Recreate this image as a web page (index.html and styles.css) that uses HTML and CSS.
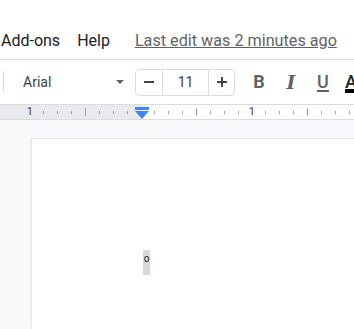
FILE: index.html
```html
<!DOCTYPE html>
<html lang="en">
<head>
  <meta charset="UTF-8" />
  <meta name="viewport" content="width=device-width, initial-scale=1.0"/>
  <title>Docs</title>
  <link rel="stylesheet" href="styles.css">
</head>
<body>

  <div class="menubar">
    <span class="menu-item">Add-ons</span>
    <span class="menu-item help">Help</span>
    <a class="last-edit" href="#">Last edit was 2 minutes ago</a>
  </div>

  <div class="toolbar">
    <span class="divider"></span>
    <div class="font-select">
      <span>Arial</span>
      <span class="caret"></span>
    </div>
    <div class="size-box">
      <button class="size-btn minus-btn"><span class="minus"></span></button>
      <span class="size-value">11</span>
      <button class="size-btn plus-btn"><span class="plus"></span></button>
    </div>
    <button class="fmt bold">B</button>
    <button class="fmt italic">I</button>
    <button class="fmt underline"><span>U</span></button>
    <button class="fmt color"><span>A</span></button>
  </div>

  <div class="ruler">
    <div class="ticks">
      <span class="cell"><span class="num">1</span></span>
      <span class="cell"><span class="tick"></span></span>
      <span class="cell"><span class="tick"></span></span>
      <span class="cell"><span class="tick"></span></span>
      <span class="cell"><span class="tick long"></span></span>
      <span class="cell"><span class="tick"></span></span>
      <span class="cell"><span class="tick"></span></span>
      <span class="cell"><span class="tick"></span></span>
      <span class="cell"></span>
      <span class="cell"><span class="tick"></span></span>
      <span class="cell"><span class="tick"></span></span>
      <span class="cell"><span class="tick"></span></span>
      <span class="cell"><span class="tick long"></span></span>
      <span class="cell"><span class="tick"></span></span>
      <span class="cell"><span class="tick"></span></span>
      <span class="cell"><span class="tick"></span></span>
      <span class="cell"><span class="num">1</span></span>
      <span class="cell"><span class="tick"></span></span>
      <span class="cell"><span class="tick"></span></span>
      <span class="cell"><span class="tick"></span></span>
      <span class="cell"><span class="tick long"></span></span>
      <span class="cell"><span class="tick"></span></span>
      <span class="cell"><span class="tick"></span></span>
      <span class="cell"><span class="tick"></span></span>
    </div>
    <svg class="indent-marker" width="14" height="13" viewBox="0 0 14 13">
      <rect x="0" y="0" width="14" height="3" fill="#4285f4"/>
      <polygon points="0,4 14,4 7,12" fill="#4285f4"/>
    </svg>
  </div>

  <div class="canvas">
    <div class="page">
      <span class="cursor">o</span>
    </div>
  </div>

</body>
</html>
```

FILE: styles.css
```css
body {
  margin: 0;
  font-family: Roboto, "Liberation Sans", Arial, sans-serif;
  background: #fff;
  color: #202124;
  width: 354px;
  height: 329px;
  overflow: hidden;
}

.menubar {
  display: flex;
  align-items: flex-start;
  height: 20px;
  padding: 31px 0 8px 1px;
  border-bottom: 1px solid #dadce0;
  font-size: 16px;
  line-height: 20px;
  white-space: nowrap;
  overflow: hidden;
}

.menu-item {
  color: #202124;
}

.help {
  margin-left: 17px;
}

.last-edit {
  margin-left: 25px;
  color: #5f6368;
  text-decoration: underline;
  font-size: 16.2px;
}

.toolbar {
  display: flex;
  align-items: center;
  height: 44px;
  white-space: nowrap;
  overflow: hidden;
}

.toolbar > * {
  flex-shrink: 0;
}

.divider {
  width: 1px;
  height: 22px;
  margin-left: 3px;
  background: #dadce0;
}

.font-select {
  display: flex;
  align-items: center;
  justify-content: space-between;
  width: 101px;
  margin-left: 19px;
  font-size: 14px;
  line-height: 16px;
  color: #3c4043;
}

.caret {
  width: 0;
  height: 0;
  border-left: 4.5px solid transparent;
  border-right: 4.5px solid transparent;
  border-top: 4.5px solid #5f6368;
}

.size-box {
  display: flex;
  height: 25px;
  margin-left: 11px;
  border: 1px solid #dadce0;
  border-radius: 4px;
}

.size-btn {
  display: flex;
  align-items: center;
  justify-content: center;
  padding: 0;
  border: none;
  background: none;
}

.minus-btn {
  width: 27px;
  border-right: 1px solid #dadce0;
}

.plus-btn {
  width: 26px;
  border-left: 1px solid #dadce0;
}

.minus {
  width: 10px;
  height: 2px;
  background: #444746;
}

.plus {
  position: relative;
  width: 10px;
  height: 10px;
}

.plus::before,
.plus::after {
  content: "";
  position: absolute;
  background: #444746;
}

.plus::before {
  left: 0;
  top: 4px;
  width: 10px;
  height: 2px;
}

.plus::after {
  left: 4px;
  top: 0;
  width: 2px;
  height: 10px;
}

.size-value {
  width: 45px;
  text-align: center;
  font-size: 14px;
  line-height: 25px;
  color: #3c4043;
}

.fmt {
  width: 32px;
  height: 28px;
  padding: 0;
  border: none;
  background: none;
  color: #5f6368;
  font-family: Roboto, sans-serif;
  font-size: 18px;
  line-height: 28px;
  text-align: center;
}

.bold {
  margin-left: 8px;
  font-weight: bold;
}

.italic {
  font-family: "DejaVu Serif", serif;
  font-style: italic;
  font-weight: bold;
  font-size: 19px;
}

.underline span {
  display: inline-block;
  line-height: 16px;
  font-weight: 500;
  border-bottom: 2px solid #5f6368;
}

.color {
  text-align: left;
  padding-left: 6px;
}

.color span {
  display: inline-block;
  width: 14px;
  line-height: 14px;
  color: #202124;
  font-weight: 500;
  border-bottom: 4px solid #000;
}

.ruler {
  position: relative;
  height: 14px;
  border-top: 1px solid #dadce0;
  border-bottom: 1px solid #dadce0;
  background: linear-gradient(to right, #e8eaed 142px, #fff 142px);
  overflow: hidden;
}

.ticks {
  display: flex;
  height: 14px;
  padding-left: 23px;
}

.cell {
  display: flex;
  align-items: center;
  justify-content: center;
  flex: 0 0 13.875px;
}

.tick {
  width: 1px;
  height: 3px;
  background: #9aa0a6;
}

.tick.long {
  height: 8px;
}

.num {
  font-size: 11px;
  line-height: 14px;
  color: #3c4043;
}

.indent-marker {
  position: absolute;
  left: 135px;
  top: 2px;
}

.canvas {
  height: 190px;
  padding: 19px 0 0 32px;
  background: #f8f9fa;
  overflow: hidden;
}

.page {
  width: 322px;
  height: 190px;
  padding: 108px 0 0 111px;
  box-sizing: border-box;
  background: #fff;
  box-shadow: 0 0 0 1px #e6e7e9, 0 1px 3px rgba(60, 64, 67, 0.15);
}

.cursor {
  display: inline-block;
  width: 7px;
  height: 19px;
  padding-top: 6px;
  background: #d9d9d9;
  font-size: 10px;
  line-height: 5px;
  color: #202124;
  text-align: center;
}
```
